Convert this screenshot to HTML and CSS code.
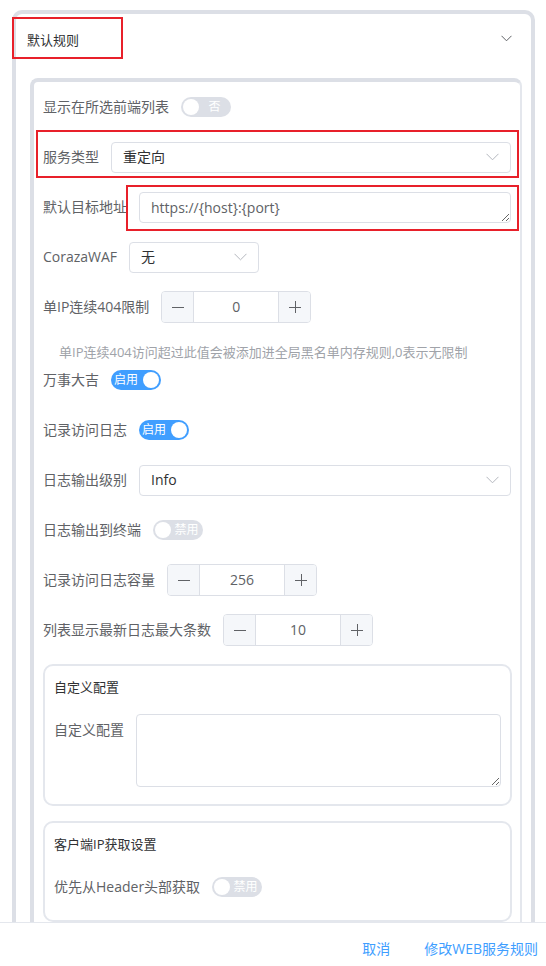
FILE: index.html
```html
<!DOCTYPE html>
<html lang="zh-CN">
<head>
<meta charset="utf-8">
<title>默认规则</title>
<link rel="stylesheet" href="styles.css">
</head>
<body>
<div class="page">
  <div class="scroll">
    <div class="collapse">
      <div class="collapse-head">
        <span class="collapse-title">默认规则</span>
        <svg class="head-arrow" width="11" height="7" viewBox="0 0 11 7"><path d="M0.5 0.8 L5.5 5.8 L10.5 0.8" fill="none" stroke="#606266" stroke-width="1"/></svg>
      </div>
      <div class="collapse-body">
        <div class="inner">
          <div class="item">
            <span class="label">显示在所选前端列表</span>
            <div class="ctrl">
              <span class="switch off"><span class="knob"></span><span class="sw-text">否</span></span>
            </div>
          </div>
          <div class="item">
            <span class="label">服务类型</span>
            <div class="ctrl grow">
              <div class="select grow"><span class="value">重定向</span>
                <svg class="sel-arrow" width="13" height="8" viewBox="0 0 13 8"><path d="M0.5 0.8 L6.5 6.8 L12.5 0.8" fill="none" stroke="#b4b7be" stroke-width="1"/></svg>
              </div>
            </div>
          </div>
          <div class="item">
            <span class="label">默认目标地址</span>
            <div class="ctrl grow">
              <textarea class="textarea one" readonly>https://{host}:{port}</textarea>
            </div>
          </div>
          <div class="item">
            <span class="label">CorazaWAF</span>
            <div class="ctrl">
              <div class="select small"><span class="value">无</span>
                <svg class="sel-arrow" width="13" height="8" viewBox="0 0 13 8"><path d="M0.5 0.8 L6.5 6.8 L12.5 0.8" fill="none" stroke="#b4b7be" stroke-width="1"/></svg>
              </div>
            </div>
          </div>
          <div class="item">
            <span class="label">单IP连续404限制</span>
            <div class="ctrl">
              <div class="stepper">
                <span class="step-btn minus"><svg width="14" height="14" viewBox="0 0 14 14"><path d="M1 7.5 H13" stroke="#606266" stroke-width="1"/></svg></span>
                <span class="step-val">0</span>
                <span class="step-btn plus"><svg width="14" height="14" viewBox="0 0 14 14"><path d="M1 7.5 H13 M7.5 1 V13" stroke="#606266" stroke-width="1"/></svg></span>
              </div>
            </div>
          </div>
          <div class="hint">单IP连续404访问超过此值会被添加进全局黑名单内存规则,0表示无限制</div>
          <div class="item">
            <span class="label">万事大吉</span>
            <div class="ctrl">
              <span class="switch on"><span class="sw-text">启用</span><span class="knob"></span></span>
            </div>
          </div>
          <div class="item">
            <span class="label">记录访问日志</span>
            <div class="ctrl">
              <span class="switch on"><span class="sw-text">启用</span><span class="knob"></span></span>
            </div>
          </div>
          <div class="item">
            <span class="label">日志输出级别</span>
            <div class="ctrl grow">
              <div class="select grow"><span class="value">Info</span>
                <svg class="sel-arrow" width="13" height="8" viewBox="0 0 13 8"><path d="M0.5 0.8 L6.5 6.8 L12.5 0.8" fill="none" stroke="#b4b7be" stroke-width="1"/></svg>
              </div>
            </div>
          </div>
          <div class="item">
            <span class="label">日志输出到终端</span>
            <div class="ctrl">
              <span class="switch off"><span class="knob"></span><span class="sw-text">禁用</span></span>
            </div>
          </div>
          <div class="item">
            <span class="label">记录访问日志容量</span>
            <div class="ctrl">
              <div class="stepper">
                <span class="step-btn minus"><svg width="14" height="14" viewBox="0 0 14 14"><path d="M1 7.5 H13" stroke="#606266" stroke-width="1"/></svg></span>
                <span class="step-val">256</span>
                <span class="step-btn plus"><svg width="14" height="14" viewBox="0 0 14 14"><path d="M1 7.5 H13 M7.5 1 V13" stroke="#606266" stroke-width="1"/></svg></span>
              </div>
            </div>
          </div>
          <div class="item">
            <span class="label">列表显示最新日志最大条数</span>
            <div class="ctrl">
              <div class="stepper">
                <span class="step-btn minus"><svg width="14" height="14" viewBox="0 0 14 14"><path d="M1 7.5 H13" stroke="#606266" stroke-width="1"/></svg></span>
                <span class="step-val">10</span>
                <span class="step-btn plus"><svg width="14" height="14" viewBox="0 0 14 14"><path d="M1 7.5 H13 M7.5 1 V13" stroke="#606266" stroke-width="1"/></svg></span>
              </div>
            </div>
          </div>

          <div class="card">
            <div class="card-title">自定义配置</div>
            <div class="item last">
              <span class="label">自定义配置</span>
              <div class="ctrl grow top">
                <textarea class="textarea big" readonly></textarea>
              </div>
            </div>
          </div>

          <div class="card">
            <div class="card-title">客户端IP获取设置</div>
            <div class="item last">
              <span class="label">优先从Header头部获取</span>
              <div class="ctrl">
                <span class="switch off"><span class="knob"></span><span class="sw-text">禁用</span></span>
              </div>
            </div>
          </div>
        </div>
      </div>
    </div>
  </div>
  <div class="footer">
    <span class="btn-text">取消</span>
    <span class="btn-text">修改WEB服务规则</span>
  </div>

  <div class="mark mark-head"></div>
  <div class="mark mark-type"></div>
  <div class="mark mark-addr"></div>
</div>
</body>
</html>
```

FILE: styles.css
```css
* {
  box-sizing: border-box;
}

html, body {
  margin: 0;
  padding: 0;
  background: #ffffff;
}

body {
  font-family: "Open Sans", "Noto Sans CJK SC", sans-serif;
  font-size: 14px;
  color: #606266;
}

.page {
  position: relative;
  width: 546px;
  height: 966px;
  overflow: hidden;
  background: #ffffff;
}

.scroll {
  height: 922px;
  overflow: hidden;
  padding: 10px 11px 0 12px;
}

.collapse {
  border: 4px solid #dcdfe6;
  border-bottom: none;
  border-radius: 10px 10px 0 0;
  min-height: 1200px;
}

.collapse-head {
  height: 52px;
  display: flex;
  align-items: center;
  justify-content: space-between;
  padding: 0 19px 0 11px;
}

.collapse-title {
  font-size: 13px;
  color: #303133;
  line-height: 20px;
  margin-top: -1px;
}

.head-arrow {
  display: block;
  margin-top: -3px;
}

.collapse-body {
  padding: 12px 9px 0 14px;
}

.inner {
  border-style: solid;
  border-color: #dcdfe6 #e4e7ed #dcdfe6 #dcdfe6;
  border-width: 4px 2px 0 4px;
  border-radius: 8px 8px 0 0;
  padding: 9px 9px 0 9px;
}

.item {
  display: flex;
  align-items: flex-start;
  margin-bottom: 18px;
}

.label {
  flex: none;
  line-height: 32px;
  height: 32px;
  padding-right: 12px;
  white-space: nowrap;
  color: #606266;
}

.ctrl {
  display: flex;
  align-items: center;
  min-height: 32px;
}

.ctrl.grow {
  flex: 1;
}

.select {
  height: 31px;
  border: 1px solid #dcdfe6;
  border-radius: 4px;
  display: flex;
  align-items: center;
  justify-content: space-between;
  padding: 0 11px 0 11px;
  background: #fff;
}

.select.grow {
  flex: 1;
}

.select.small {
  width: 130px;
}

.value {
  color: #303133;
  line-height: 20px;
}

.sel-arrow {
  display: block;
}

.textarea {
  display: block;
  width: 100%;
  border: 1px solid #dcdfe6;
  border-radius: 4px;
  padding: 5px 11px;
  font-family: "Open Sans", "Noto Sans CJK SC", sans-serif;
  font-size: 14px;
  line-height: 19px;
  color: #606266;
  background: #fff;
  resize: vertical;
  outline: none;
  margin: 0;
}

.textarea.one {
  height: 31px;
  overflow: hidden;
}

.textarea.big {
  height: 73px;
}

.ctrl.top {
  align-items: flex-start;
}

.switch {
  display: inline-flex;
  align-items: center;
  width: 50px;
  height: 20px;
  border-radius: 10px;
  padding: 0 2px;
}

.switch.off {
  background: #dcdfe6;
}

.switch.on {
  background: #409eff;
}

.knob {
  flex: none;
  width: 16px;
  height: 16px;
  border-radius: 50%;
  background: #ffffff;
}

.sw-text {
  flex: 1;
  text-align: center;
  color: #ffffff;
  font-size: 12px;
  line-height: 20px;
  white-space: nowrap;
}

.switch.on .sw-text {
  text-align: left;
  padding-left: 1px;
}

.switch.off .sw-text {
  padding-left: 1px;
}

.stepper {
  display: flex;
  width: 150px;
  height: 32px;
  border: 1px solid #dcdfe6;
  border-radius: 4px;
  overflow: hidden;
  background: #fff;
}

.step-btn {
  width: 32px;
  flex: none;
  background: #f5f7fa;
  display: flex;
  align-items: center;
  justify-content: center;
}

.step-btn svg {
  display: block;
}

.step-btn.minus {
  border-right: 1px solid #dcdfe6;
}

.step-btn.plus {
  border-left: 1px solid #dcdfe6;
}

.step-val {
  flex: 1;
  text-align: center;
  line-height: 30px;
  color: #606266;
}

.hint {
  font-size: 13px;
  line-height: 23px;
  padding-left: 16px;
  color: #a0a3a9;
  margin-top: -18px;
  margin-bottom: 0;
  padding-top: 18px;
  white-space: nowrap;
}

.card {
  border: 2px solid #e4e7ed;
  border-radius: 10px;
  padding: 10px 9px 0 9px;
  margin-bottom: 15px;
  margin-right: -1px;
}

.card-title {
  font-size: 13px;
  line-height: 22px;
  color: #303133;
  margin-bottom: 16px;
}

.item.last {
  margin-bottom: 17px;
}

.footer {
  height: 44px;
  border-top: 1px solid #e4e7ed;
  display: flex;
  justify-content: flex-end;
  align-items: center;
  padding: 8px 8px 0 0;
  gap: 34px;
  background: #fff;
}

.btn-text {
  color: #409eff;
  font-size: 14px;
  line-height: 20px;
}

.mark {
  position: absolute;
  border: 2px solid #e8202a;
  pointer-events: none;
}

.mark-head {
  left: 12px;
  top: 17px;
  width: 111px;
  height: 42px;
}

.mark-type {
  left: 36px;
  top: 130px;
  width: 483px;
  height: 48px;
}

.mark-addr {
  left: 126px;
  top: 185px;
  width: 393px;
  height: 46px;
}
```
